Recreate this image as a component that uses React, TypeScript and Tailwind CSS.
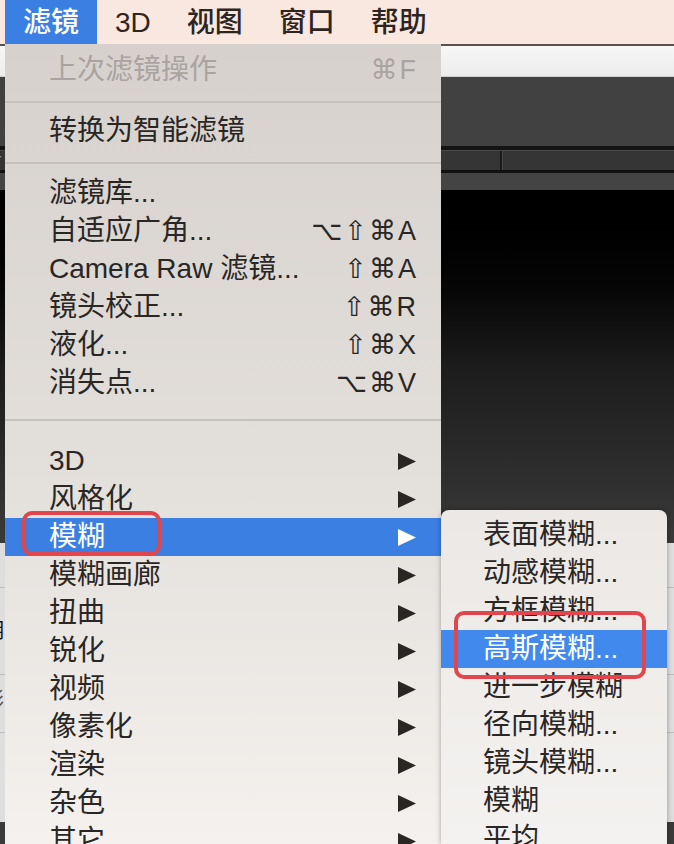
import React from 'react';

type Item = {
  label: string;
  shortcut?: string;
  sub?: boolean;
  disabled?: boolean;
  active?: boolean;
};

const font = "font-['Liberation_Sans','Noto_Sans_CJK_SC',sans-serif]";
const keyFont = "font-['Liberation_Sans','DejaVu_Sans',sans-serif]";

const menuBar = ['滤镜', '3D', '视图', '窗口', '帮助'];

const smartItems: Item[] = [
  { label: '滤镜库...' },
  { label: '自适应广角...', shortcut: '⌥⇧⌘A' },
  { label: 'Camera Raw 滤镜...', shortcut: '⇧⌘A' },
  { label: '镜头校正...', shortcut: '⇧⌘R' },
  { label: '液化...', shortcut: '⇧⌘X' },
  { label: '消失点...', shortcut: '⌥⌘V' },
];

const groupItems: Item[] = [
  { label: '3D', sub: true },
  { label: '风格化', sub: true },
  { label: '模糊', sub: true, active: true },
  { label: '模糊画廊', sub: true },
  { label: '扭曲', sub: true },
  { label: '锐化', sub: true },
  { label: '视频', sub: true },
  { label: '像素化', sub: true },
  { label: '渲染', sub: true },
  { label: '杂色', sub: true },
  { label: '其它', sub: true },
];

const blurItems = [
  '表面模糊...',
  '动感模糊...',
  '方框模糊...',
  '高斯模糊...',
  '进一步模糊',
  '径向模糊...',
  '镜头模糊...',
  '模糊',
  '平均',
];

function Arrow({ white }: { white?: boolean }) {
  return (
    <svg width="18" height="17" viewBox="0 0 18 17" className="mr-[2px]">
      <polygon points="0,0 18,8.5 0,17" fill={white ? '#ffffff' : '#2a2624'} />
    </svg>
  );
}

function Row({ item }: { item: Item }) {
  return (
    <div
      className={`h-[38px] shrink-0 flex items-center justify-between pl-[44px] pr-[23px] text-[28px] leading-none ${
        item.active ? 'bg-[#3b7fe3] text-white' : item.disabled ? 'text-[#a9a4a1]' : 'text-[#2a2624]'
      }`}
    >
      <span className="whitespace-nowrap">{item.label}</span>
      {item.shortcut && (
        <span className={`${keyFont} text-[27px] tracking-[2px] whitespace-nowrap`}>{item.shortcut}</span>
      )}
      {item.sub && <Arrow white={item.active} />}
    </div>
  );
}

function Sep({ h, top }: { h: string; top: string }) {
  return (
    <div className={`${h} shrink-0 flex flex-col`}>
      <div className={`${top} h-[2px] bg-[#c6c1bd]`} />
    </div>
  );
}

export default function App() {
  return (
    <div className={`relative w-[674px] h-[844px] overflow-hidden ${font}`}>
      {/* background app */}
      <div className="flex flex-col h-full">
        <div className="h-[44px] shrink-0 bg-[#f8e8e0] flex items-center pl-[5px]">
          {menuBar.map((m, i) => (
            <div
              key={m}
              className={`h-full flex items-center px-[18px] pt-[2px] text-[28px] font-medium ${
                i === 0 ? 'bg-[#3b7fe3] text-white' : 'text-[#2e2420]'
              }`}
            >
              {m}
            </div>
          ))}
        </div>
        <div className="h-[2px] shrink-0 bg-[#5a504c]" />
        <div className="h-[31px] shrink-0 bg-gradient-to-b from-[#f7f7f7] to-[#ececec] border-b border-[#cfcfcf]" />
        <div className="h-[69px] shrink-0 bg-[#414141]" />
        <div className="h-[4px] shrink-0 bg-[#141414]" />
        <div className="h-[20px] shrink-0 bg-[#353535] border-t border-[#4a4a4a] flex text-[#9a9a9a] text-[16px] leading-[18px]">
          <div className="w-[506px] border-r-2 border-[#1a1a1a] -ml-[4px]">r</div>
          <div className="flex-1 border-l border-[#4a4a4a]" />
        </div>
        <div className="h-[3px] shrink-0 bg-[#111111]" />
        <div className="h-[17px] shrink-0 bg-[#444444]" />
        <div className="h-[353px] shrink-0 bg-gradient-to-b from-[#000000] via-[#1c1c1c] to-[#3a3a3a]" />
        <div className="h-[279px] shrink-0 bg-[#dedede] flex flex-col text-[20px] text-[#111]">
          <div className="h-[45px] border-b border-[#bdbdbd]" />
          <div className="h-[87px] border-b border-[#bdbdbd] flex items-center">
            <span className="-ml-[16px]">明</span>
          </div>
          <div className="h-[58px] border-b border-[#bdbdbd] flex items-start">
            <span className="-ml-[16px] mt-[10px] text-[#555]">彩</span>
          </div>
        </div>
        <div className="flex-1 bg-[#3a3a3a]" />
      </div>

      {/* main filter menu */}
      <div className="absolute top-[44px] left-[5px] w-[436px] bottom-0 overflow-hidden bg-gradient-to-b from-[#d6d1cd] via-[#e2deda] to-[#f4f1ee] pt-[7px] flex flex-col">
        <Row item={{ label: '上次滤镜操作', shortcut: '⌘F', disabled: true }} />
        <Sep h="h-[23px]" top="mt-[12px]" />
        <Row item={{ label: '转换为智能滤镜' }} />
        <Sep h="h-[24px]" top="mt-[12px]" />
        {smartItems.map((it) => (
          <Row key={it.label} item={it} />
        ))}
        <Sep h="h-[40px]" top="mt-[17px]" />
        {groupItems.map((it) => (
          <Row key={it.label} item={it} />
        ))}
      </div>

      {/* blur submenu */}
      <div className="absolute top-[510px] left-[441px] w-[226px] bottom-0 overflow-hidden rounded-t-[8px] bg-gradient-to-b from-[#ebe8e5] to-[#f4f2f0] shadow-[0_0_5px_rgba(0,0,0,0.35)] pt-[6px] flex flex-col">
        {blurItems.map((b) => (
          <div
            key={b}
            className={`h-[38px] shrink-0 flex items-center pl-[42px] text-[28px] leading-none whitespace-nowrap ${
              b === '高斯模糊...' ? 'bg-[#4289ee] text-white' : 'text-[#2a2624]'
            }`}
          >
            {b}
          </div>
        ))}
      </div>

      {/* annotation boxes */}
      <div className="absolute left-[22px] top-[511px] w-[139px] h-[45px] border-4 border-[#e2454b] rounded-[10px]" />
      <div className="absolute left-[454px] top-[611px] w-[192px] h-[68px] border-4 border-[#e2454b] rounded-[10px]" />
    </div>
  );
}
